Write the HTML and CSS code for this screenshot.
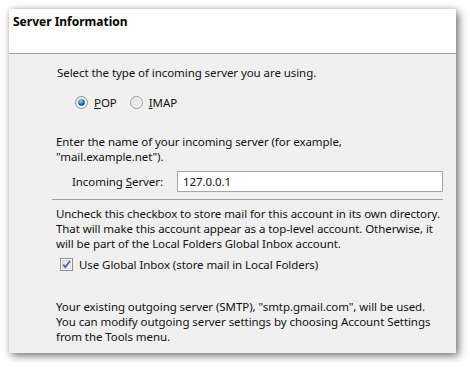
FILE: index.html
```html
<!DOCTYPE html>
<html lang="en">
	<head>
		<meta charset="UTF-8" />
		<meta name="viewport" content="width=device-width, initial-scale=1.0" />
		<title>Server Information</title>
		<link rel="stylesheet" href="styles.css">
	</head>

	<body>
		<div class="window">
			<div class="header">Server Information</div>
			<div class="content">
				<p class="intro">Select the type of incoming server you are using.</p>
				<div class="radios">
					<label class="radio">
						<svg width="13" height="13" viewBox="0 0 13 13">
							<defs>
								<radialGradient id="dot" cx="40%" cy="35%" r="65%">
									<stop offset="0" stop-color="#9fdcff" />
									<stop offset="0.5" stop-color="#2a8ad4" />
									<stop offset="1" stop-color="#0d3c6e" />
								</radialGradient>
								<linearGradient id="ring" x1="0" y1="0" x2="1" y2="1">
									<stop offset="0" stop-color="#e4e4e4" />
									<stop offset="1" stop-color="#ffffff" />
								</linearGradient>
							</defs>
							<circle cx="6.5" cy="6.5" r="6" fill="url(#ring)" stroke="#8e8f8f" />
							<circle cx="6.5" cy="6.5" r="3.3" fill="url(#dot)" />
						</svg>
						<span><u>P</u>OP</span>
					</label>
					<label class="radio">
						<svg width="13" height="13" viewBox="0 0 13 13">
							<circle cx="6.5" cy="6.5" r="6" fill="url(#ring)" stroke="#9a9b9b" />
							<circle cx="6.5" cy="6.5" r="3.6" fill="#ececec" stroke="#d8d8d8" stroke-width="0.6" />
						</svg>
						<span><u>I</u>MAP</span>
					</label>
				</div>
				<p class="text">Enter the name of your incoming server (for example,<br>"mail.example.net").</p>
				<div class="field">
					<span class="field-label">Incoming <u>S</u>erver:</span>
					<div class="input">127.0.0.1</div>
				</div>
				<div class="section">
					<p class="text">Uncheck this checkbox to store mail for this account in its own directory.<br>That will make this account appear as a top-level account. Otherwise, it<br>will be part of the Local Folders Global Inbox account.</p>
					<label class="check">
						<svg width="13" height="13" viewBox="0 0 13 13">
							<defs>
								<linearGradient id="box" x1="0" y1="0" x2="1" y2="1">
									<stop offset="0" stop-color="#dcdcdc" />
									<stop offset="1" stop-color="#fbfbfb" />
								</linearGradient>
							</defs>
							<rect x="0.5" y="0.5" width="12" height="12" fill="#f4f4f4" stroke="#8e8f8f" />
							<rect x="2.5" y="2.5" width="8" height="8" fill="url(#box)" stroke="#c6c6c6" stroke-width="0.6" />
							<path d="M3.3 6.6 L5.4 9.2 L9.9 2.9" fill="none" stroke="#4a5fa8" stroke-width="1.7" />
						</svg>
						<span>Use Global Inbox (store mail in Local Folders)</span>
					</label>
				</div>
				<p class="text outgoing">Your existing outgoing server (SMTP), "smtp.gmail.com", will be used.<br>You can modify outgoing server settings by choosing Account Settings<br>from the Tools menu.</p>
			</div>
		</div>
	</body>
</html>
```

FILE: styles.css
```css
* {
	padding: 0;
	margin: 0;
	box-sizing: border-box;
}
body {
	background-color: #ffffff;
	font-family: "Noto Sans", "Open Sans", sans-serif;
	font-size: 11.5px;
	letter-spacing: -0.07px;
	line-height: 15px;
	color: #111111;
	padding: 9px;
}
.window {
	width: 447px;
	height: 344px;
	background-color: #f0f0f0;
	box-shadow: 3px 3px 8px rgba(0, 0, 0, 0.5), 0 0 5px rgba(0, 0, 0, 0.15);
}
.header {
	height: 45px;
	background-color: #ffffff;
	border-bottom: 1px solid #a0a0a0;
	font-weight: bold;
	font-size: 12px;
	letter-spacing: 0;
	padding: 5px 4px;
	color: #000000;
}
.content {
	padding: 11px 13px 0 43px;
}
.intro {
	padding-left: 5px;
}
.radios {
	display: flex;
	gap: 13px;
	padding: 15px 0 0 23px;
	align-items: center;
}
.radio,
.check {
	display: flex;
	align-items: center;
	gap: 6px;
}
.text {
	padding-left: 4px;
	white-space: nowrap;
}
.radios + .text {
	margin-top: 24px;
}
.field {
	display: flex;
	align-items: center;
	margin-top: 7px;
	padding-left: 20px;
}
.field-label {
	width: 105px;
}
.input {
	flex: 1;
	height: 21px;
	background-color: #ffffff;
	border: 1px solid #a5a5a5;
	padding: 2px 5px;
}
.section {
	margin-top: 7px;
	border-top: 1px solid #a0a0a0;
	padding-top: 6px;
}
.check {
	margin: 6px 0 0 8px;
}
.outgoing {
	margin-top: 27px;
}
```
